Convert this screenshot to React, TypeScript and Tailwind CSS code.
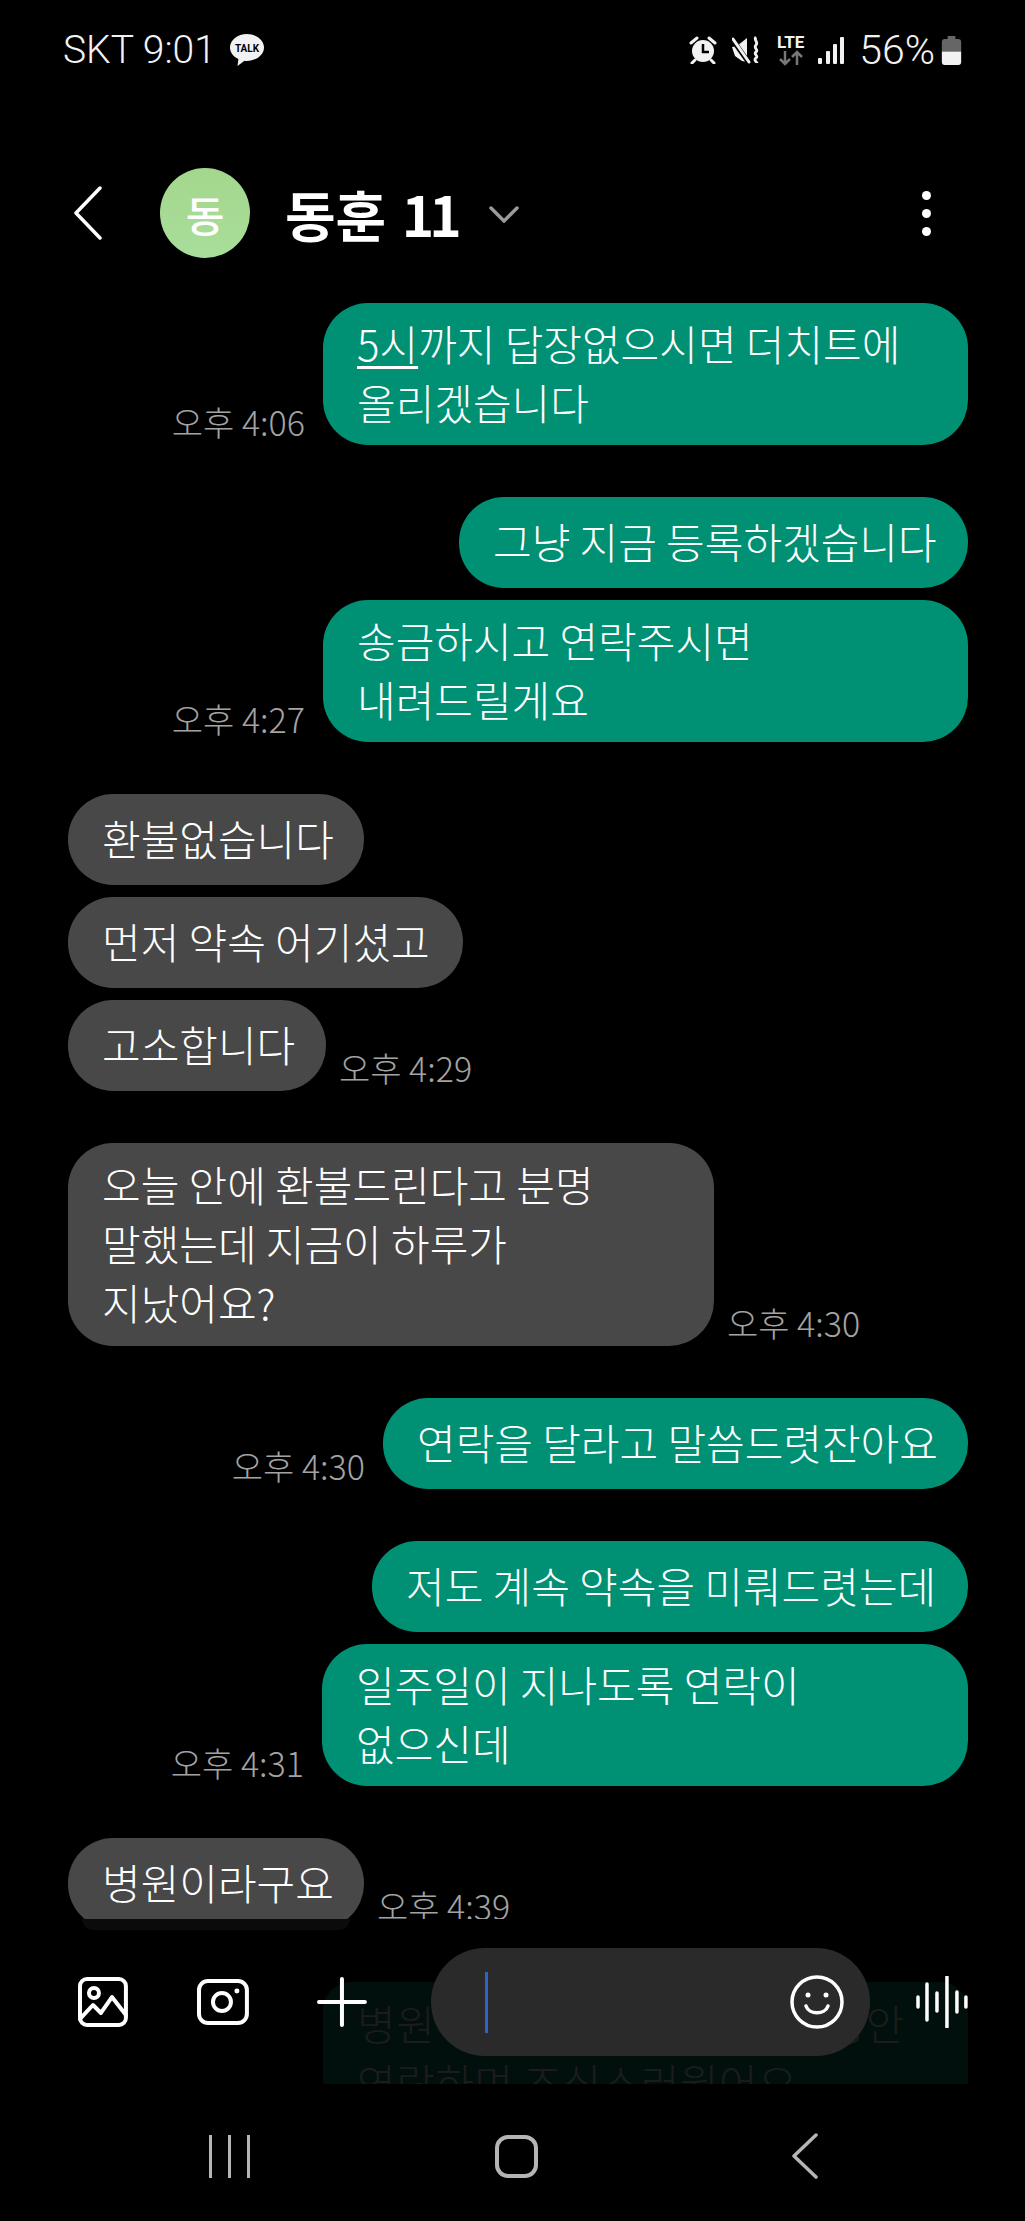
import type { ReactNode } from 'react'

const font = { fontFamily: '"Noto Sans CJK KR", "Noto Sans", sans-serif' }

type Msg = { lines: ReactNode[]; size: string; time?: string }
type Group = { mine: boolean; msgs: Msg[] }

const groups: Group[] = [
  {
    mine: true,
    msgs: [
      {
        lines: [
          <span key="a">
            <span className="underline decoration-[3px] underline-offset-[5px]">5시</span>까지 답장없으시면 더치트에
          </span>,
          '올리겠습니다',
        ],
        size: 'w-[645px]',
        time: '오후 4:06',
      },
    ],
  },
  {
    mine: true,
    msgs: [
      { lines: ['그냥 지금 등록하겠습니다'], size: 'w-[509px]' },
      { lines: ['송금하시고 연락주시면', '내려드릴게요'], size: 'w-[645px]', time: '오후 4:27' },
    ],
  },
  {
    mine: false,
    msgs: [
      { lines: ['환불없습니다'], size: 'w-[296px]' },
      { lines: ['먼저 약속 어기셨고'], size: 'w-[395px]' },
      { lines: ['고소합니다'], size: 'w-[258px]', time: '오후 4:29' },
    ],
  },
  {
    mine: false,
    msgs: [
      {
        lines: ['오늘 안에 환불드린다고 분명', '말했는데 지금이 하루가', '지났어요?'],
        size: 'w-[646px] h-[203px]',
        time: '오후 4:30',
      },
    ],
  },
  {
    mine: true,
    msgs: [{ lines: ['연락을 달라고 말씀드렷잔아요'], size: 'w-[585px]', time: '오후 4:30' }],
  },
  {
    mine: true,
    msgs: [
      { lines: ['저도 계속 약속을 미뤄드렷는데'], size: 'w-[596px]' },
      { lines: ['일주일이 지나도록 연락이', '없으신데'], size: 'w-[646px]', time: '오후 4:31' },
    ],
  },
  {
    mine: false,
    msgs: [{ lines: ['병원이라구요'], size: 'w-[296px]', time: '오후 4:39' }],
  },
]

function Bubble({ msg, mine }: { msg: Msg; mine: boolean }) {
  const time = msg.time && (
    <span className="text-[34px] leading-[24px] font-light text-[#a3a3a3] whitespace-nowrap pb-[11px]">
      {msg.time}
    </span>
  )
  return (
    <div className={`flex items-end ${mine ? 'justify-end gap-[18px]' : 'justify-start gap-[13px]'}`}>
      {mine && time}
      <div
        className={`${msg.size} min-h-[91px] rounded-[45px] px-[34px] pt-[10px] pb-[14px] flex flex-col justify-center text-[42px] leading-[59px] font-light text-white whitespace-nowrap ${
          mine ? 'bg-[#009074]' : 'bg-[#484848]'
        }`}
      >
        {msg.lines.map((l, i) => (
          <div key={i}>{l}</div>
        ))}
      </div>
      {!mine && time}
    </div>
  )
}

function StatusBar() {
  return (
    <div className="h-[123px] pl-[63px] pr-[63px] pt-[28px] flex items-start justify-between text-[#f2f2f2]">
      <div className="flex items-center h-[44px] gap-[13px]">
        <span className="text-[39px] leading-[44px] font-light" style={{ fontFamily: 'Roboto, sans-serif' }}>
          SKT 9:01
        </span>
        <svg width="36" height="36" viewBox="0 0 36 36">
          <path d="M18 2C8.600 2 1 8 1 15.500c0 5 3.400 9.200 8.400 11.500L8.500 34l7-5.300c.8.100 1.700.2 2.500.2 9.400 0 17-6 17-13.400S27.400 2 18 2z" fill="#f2f2f2" />
          <text x="18" y="20" textAnchor="middle" fontSize="10" fontWeight="700" fill="#000" fontFamily="Roboto, sans-serif">
            TALK
          </text>
        </svg>
      </div>
      <div className="flex items-center h-[44px]">
        <svg width="28" height="28" viewBox="0 0 28 28" className="mr-[15px]" fill="#f2f2f2">
          <circle cx="14" cy="15" r="11" />
          <path d="M2 7l6-5M26 7l-6-5M6 24l-3 3M22 24l3 3" stroke="#f2f2f2" strokeWidth="3" strokeLinecap="round" />
          <path d="M14 8v8h6" stroke="#000" strokeWidth="2.500" fill="none" />
        </svg>
        <svg width="28" height="28" viewBox="0 0 28 28" className="mr-[15px]" fill="#f2f2f2">
          <path d="M0 11l5-1 10-8v24L10 25 3 20z" />
          <path d="M0 3l17 24" stroke="#000" strokeWidth="5" />
          <path d="M1 3l16 23" stroke="#f2f2f2" strokeWidth="3" strokeLinecap="round" />
          <path d="M24 1c-3 3 3 5 0 8s3 5 0 7 3 4 0 6 1 4 1 5" stroke="#f2f2f2" strokeWidth="2.800" fill="none" />
        </svg>
        <div className="w-[31px] h-[32px] mr-[12px] flex flex-col items-center">
          <span className="text-[17px] leading-[16px] font-bold" style={{ fontFamily: 'Roboto, sans-serif' }}>
            LTE
          </span>
          <svg width="30" height="16" viewBox="0 0 30 16" fill="none" stroke="#777" strokeWidth="2.500">
            <path d="M9 1v13M4 9l5 5 5-5M21 15V2M16 7l5-5 5 5" />
          </svg>
        </div>
        <svg width="26" height="27" viewBox="0 0 26 27" fill="#f2f2f2" className="mr-[15px]">
          <rect x="0" y="21" width="4" height="6" rx="1" />
          <rect x="8" y="14" width="4" height="13" rx="1" />
          <rect x="15" y="7" width="4" height="20" rx="1" />
          <rect x="22" y="0" width="4" height="27" rx="1" />
        </svg>
        <span className="text-[41px] leading-[44px] font-light mr-[6px]" style={{ fontFamily: 'Roboto, sans-serif' }}>
          56%
        </span>
        <svg width="21" height="29" viewBox="0 0 20 30">
          <path d="M6 0h8v3h3a3 3 0 0 1 3 3v10H0V6a3 3 0 0 1 3-3h3z" fill="#666" />
          <path d="M0 16h20v11a3 3 0 0 1-3 3H3a3 3 0 0 1-3-3z" fill="#f2f2f2" />
        </svg>
      </div>
    </div>
  )
}

function Header() {
  return (
    <div className="h-[180px] flex items-center pl-[73px] pr-[94px]">
      <svg width="30" height="54" viewBox="0 0 30 54" fill="none" stroke="#fff" strokeWidth="3.500" strokeLinecap="round" strokeLinejoin="round">
        <path d="M27 2L3 27l24 25" />
      </svg>
      <div className="ml-[57px] w-[90px] h-[90px] rounded-full bg-gradient-to-b from-[#a4d78d] to-[#a8de9b] flex items-center justify-center text-[42px] font-medium text-white">
        동
      </div>
      <span className="ml-[35px] text-[55px] leading-none font-bold text-white whitespace-nowrap">
        동훈<span className="ml-[8px] tracking-[-5px]"> 11</span>
      </span>
      <svg width="30" height="17" viewBox="0 0 30 17" fill="none" stroke="#9a9a9a" strokeWidth="3.500" strokeLinecap="round" className="ml-[32px] mt-[2px]">
        <path d="M2 2l13 13L28 2" />
      </svg>
      <div className="ml-auto flex flex-col gap-[9px]">
        <div className="w-[9px] h-[9px] rounded-full bg-white" />
        <div className="w-[9px] h-[9px] rounded-full bg-white" />
        <div className="w-[9px] h-[9px] rounded-full bg-white" />
      </div>
    </div>
  )
}

function Composer() {
  return (
    <div className="relative flex-1">
      {/* dimmed bubble scrolled under the input */}
      <div className="absolute left-[323px] top-[63px] w-[645px] h-[102px] rounded-t-[28px] bg-[#02100d] overflow-hidden px-[34px] pt-[11px] text-[42px] leading-[59px] font-light tracking-[0.5px] text-[#1c1c1c] whitespace-nowrap">
        <div>병원에 입원해 있어서 며칠 동안</div>
        <div>연락하며 조심스러웠어요</div>
      </div>
      <div className="h-[11px] w-[268px] ml-[82px] rounded-b-[20px] bg-[#0b0b0b]" />
      <div className="relative h-[126px] pt-[18px] pl-[78px] pr-[57px] flex items-start">
        <div className="h-[108px] flex items-center w-full">
          <svg width="50" height="50" viewBox="0 0 50 50" fill="none" stroke="#fff" strokeWidth="4" strokeLinecap="round" strokeLinejoin="round">
            <rect x="2" y="2" width="46" height="46" rx="7" />
            <circle cx="16" cy="16" r="5" />
            <path d="M2 42l13-14 8 8 11-16 14 18" />
          </svg>
          <svg width="52" height="46" viewBox="0 0 52 46" fill="none" stroke="#fff" strokeWidth="4" className="ml-[69px]">
            <rect x="2" y="2" width="48" height="42" rx="9" />
            <circle cx="25" cy="23" r="9" />
            <circle cx="40" cy="12" r="2.500" fill="#fff" stroke="none" />
          </svg>
          <svg width="50" height="50" viewBox="0 0 50 50" fill="none" stroke="#fff" strokeWidth="4" strokeLinecap="round" className="ml-[68px]">
            <path d="M25 2v46M2 25h46" />
          </svg>
          <div className="ml-[64px] w-[440px] h-[108px] rounded-[54px] bg-[#2a2a2a] flex items-center pl-[54px] pr-[26px] justify-between">
            <div className="w-[3px] h-[61px] bg-[#2f62cf]" />
            <svg width="54" height="54" viewBox="0 0 54 54" fill="none" stroke="#fff" strokeWidth="3.500" strokeLinecap="round">
              <circle cx="27" cy="27" r="25" />
              <path d="M16 31c3 9 19 9 22 0" />
              <circle cx="18" cy="20" r="2.500" fill="#fff" stroke="none" />
              <circle cx="36" cy="20" r="2.500" fill="#fff" stroke="none" />
            </svg>
          </div>
          <svg width="52" height="52" viewBox="0 0 52 52" fill="none" stroke="#fff" strokeWidth="3.500" strokeLinecap="round" className="ml-[46px]">
            <path d="M2 21v10M11 8v36M21 17v18M31 1v50M41 16v20M50 21v10" />
          </svg>
        </div>
      </div>
      <div className="relative mt-[77px] flex items-center pl-[209px]">
        <div className="flex gap-[16px]">
          <div className="w-[3px] h-[43px] bg-[#b5b5b5]" />
          <div className="w-[3px] h-[43px] bg-[#b5b5b5]" />
          <div className="w-[3px] h-[43px] bg-[#b5b5b5]" />
        </div>
        <div className="ml-[245px] w-[43px] h-[43px] rounded-[13px] border-[4px] border-[#b5b5b5]" />
        <svg width="26" height="46" viewBox="0 0 26 46" fill="none" stroke="#b5b5b5" strokeWidth="3.500" strokeLinecap="round" strokeLinejoin="round" className="ml-[254px]">
          <path d="M24 2L2 23l22 21" />
        </svg>
      </div>
    </div>
  )
}

export default function App() {
  return (
    <div className="w-[1025px] h-[2221px] bg-black flex flex-col overflow-hidden" style={font}>
      <StatusBar />
      <Header />
      <div className="h-[1616px] overflow-hidden pl-[68px] pr-[57px] flex flex-col gap-[52px]">
        {groups.map((g, i) => (
          <div key={i} className="flex flex-col gap-[12px]">
            {g.msgs.map((m, j) => (
              <Bubble key={j} msg={m} mine={g.mine} />
            ))}
          </div>
        ))}
      </div>
      <Composer />
    </div>
  )
}
